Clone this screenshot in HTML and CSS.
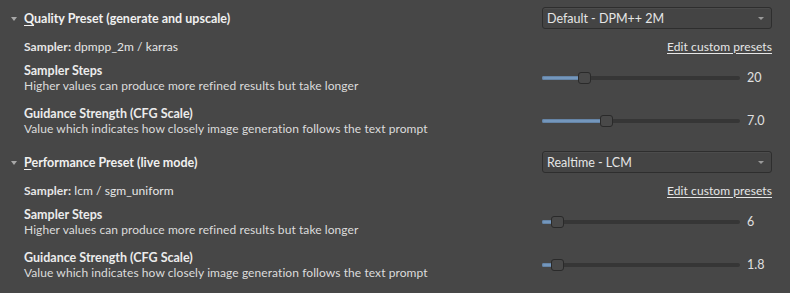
FILE: index.html
```html
<!DOCTYPE html>
<html>
<head>
<meta charset="utf-8">
<link rel="stylesheet" href="styles.css">
</head>
<body>
<div class="panel">
  <section class="group">
    <div class="head">
      <div class="head-left">
        <span class="caret"></span>
        <span class="head-title"><u>Q</u>uality Preset (generate and upscale)</span>
      </div>
      <div class="combo"><span>Default - DPM++ 2M</span><span class="combo-arrow"></span></div>
    </div>
    <div class="sampler-row">
      <div class="sampler"><b>Sampler:</b> dpmpp_2m / karras</div>
      <a class="edit">Edit custom presets</a>
    </div>
    <div class="setting first">
      <div class="labels">
        <div class="title">Sampler Steps</div>
        <div class="desc">Higher values can produce more refined results but take longer</div>
      </div>
      <div class="control">
        <div class="track"><div class="fill" style="width:40px"></div><div class="handle" style="left:36px"></div></div>
        <div class="value">20</div>
      </div>
    </div>
    <div class="setting second">
      <div class="labels">
        <div class="title">Guidance Strength (CFG Scale)</div>
        <div class="desc">Value which indicates how closely image generation follows the text prompt</div>
      </div>
      <div class="control">
        <div class="track"><div class="fill" style="width:62px"></div><div class="handle" style="left:58px"></div></div>
        <div class="value">7.0</div>
      </div>
    </div>
  </section>
  <section class="group">
    <div class="head">
      <div class="head-left">
        <span class="caret"></span>
        <span class="head-title"><u>P</u>erformance Preset (live mode)</span>
      </div>
      <div class="combo"><span>Realtime - LCM</span><span class="combo-arrow"></span></div>
    </div>
    <div class="sampler-row">
      <div class="sampler"><b>Sampler:</b> lcm / sgm_uniform</div>
      <a class="edit">Edit custom presets</a>
    </div>
    <div class="setting first">
      <div class="labels">
        <div class="title">Sampler Steps</div>
        <div class="desc">Higher values can produce more refined results but take longer</div>
      </div>
      <div class="control">
        <div class="track"><div class="fill" style="width:13px"></div><div class="handle" style="left:9px"></div></div>
        <div class="value">6</div>
      </div>
    </div>
    <div class="setting second">
      <div class="labels">
        <div class="title">Guidance Strength (CFG Scale)</div>
        <div class="desc">Value which indicates how closely image generation follows the text prompt</div>
      </div>
      <div class="control">
        <div class="track"><div class="fill" style="width:12px"></div><div class="handle" style="left:9px"></div></div>
        <div class="value">1.8</div>
      </div>
    </div>
  </section>
</div>
</body>
</html>
```
FILE: styles.css
```css
html, body {
  margin: 0;
  padding: 0;
  background: #474747;
}
body {
  font-family: Lato, "Liberation Sans", sans-serif;
  font-size: 12px;
  color: #e6e6e6;
  width: 790px;
  height: 293px;
  overflow: hidden;
}
.panel {
  padding: 0 18px 0 10px;
}
.group {
  padding: 7px 0 8px 0;
}
.head {
  display: flex;
  justify-content: space-between;
  align-items: center;
  height: 22px;
}
.head-left {
  display: flex;
  align-items: center;
}
.caret {
  width: 0;
  height: 0;
  border-left: 3px solid transparent;
  border-right: 3px solid transparent;
  border-top: 4px solid #a8a8a8;
  margin: 1px 7px 0 1px;
}
.head-title {
  font-weight: bold;
  font-size: 12.5px;
  color: #f0f0f0;
}
.head-title u {
  text-decoration-thickness: 1px;
  text-underline-offset: 2px;
}
.combo {
  box-sizing: border-box;
  width: 230px;
  height: 22px;
  border: 1px solid #2e2e2e;
  border-radius: 3px;
  background: #444444;
  box-shadow: inset 0 1px 0 #4c4c4c;
  display: flex;
  align-items: center;
  justify-content: space-between;
  padding: 0 6px 0 4px;
  color: #e6e6e6;
  font-size: 12.5px;
}
.combo-arrow {
  width: 0;
  height: 0;
  border-left: 3px solid transparent;
  border-right: 3px solid transparent;
  border-top: 3px solid #9a9a9a;
  margin-right: 1px;
}
.sampler-row {
  display: flex;
  justify-content: space-between;
  align-items: center;
  height: 16px;
  margin-top: 9px;
  padding-left: 14px;
  letter-spacing: 0.08px;
}
.sampler b {
  font-weight: bold;
}
.edit {
  text-decoration: underline;
  text-underline-offset: 2px;
  color: #e6e6e6;
  font-size: 12px;
}
.setting {
  display: flex;
  justify-content: space-between;
  align-items: center;
  height: 30px;
  padding-left: 14px;
  line-height: 15px;
}
.setting.first {
  margin-top: 9px;
}
.setting.second {
  margin-top: 13px;
}
.title {
  font-weight: bold;
  font-size: 12.5px;
  color: #ececec;
}
.desc {
  color: #dcdcdc;
  letter-spacing: 0.08px;
}
.control {
  display: flex;
  align-items: center;
  width: 230px;
  margin-top: -1px;
}
.track {
  position: relative;
  width: 198px;
  height: 4px;
  border-radius: 2px;
  background: #363636;
}
.fill {
  height: 4px;
  border-radius: 2px;
  background: #7497bd;
  box-shadow: inset 0 0 0 1px #6584a6;
}
.handle {
  position: absolute;
  top: -4px;
  box-sizing: border-box;
  width: 13px;
  height: 12px;
  border-radius: 3px;
  background: #494949;
  border: 1px solid #2a2a2a;
}
.value {
  margin-left: 7px;
  color: #e0e0e0;
  font-size: 12.5px;
}
```
